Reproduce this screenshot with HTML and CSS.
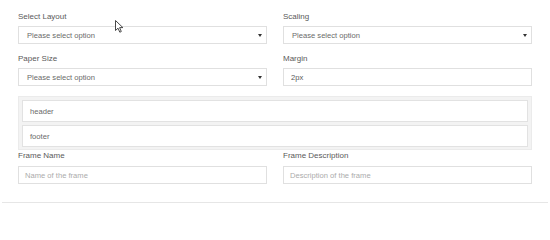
FILE: index.html
```html
<!DOCTYPE html>
<html>
<head>
<meta charset="utf-8">
<link rel="stylesheet" href="styles.css">
</head>
<body>
<div class="page">
  <div class="grid">
    <div class="field">
      <label class="lbl">Select Layout</label>
      <div class="select"><span>Please select option</span><i class="caret"></i></div>
    </div>
    <div class="field">
      <label class="lbl">Scaling</label>
      <div class="select"><span>Please select option</span><i class="caret"></i></div>
    </div>
    <div class="field">
      <label class="lbl">Paper Size</label>
      <div class="select"><span>Please select option</span><i class="caret"></i></div>
    </div>
    <div class="field">
      <label class="lbl">Margin</label>
      <div class="input value">2px</div>
    </div>
  </div>
  <div class="panel">
    <div class="item">header</div>
    <div class="item">footer</div>
  </div>
  <div class="grid grid-bottom">
    <div class="field">
      <label class="lbl">Frame Name</label>
      <div class="input placeholder">Name of the frame</div>
    </div>
    <div class="field">
      <label class="lbl">Frame Description</label>
      <div class="input placeholder">Description of the frame</div>
    </div>
  </div>
  <div class="rule"></div>
  <svg class="cursor" width="9" height="13" viewBox="0 0 9 13">
    <path d="M0.5 0.5 L0.5 10.5 L3 8.2 L4.8 12.2 L6.3 11.5 L4.6 7.6 L7.9 7.6 Z" fill="#fff" stroke="#333" stroke-width="0.9" stroke-linejoin="round"/>
  </svg>
</div>
</body>
</html>
```

FILE: styles.css
```css
* { box-sizing: border-box; }
html, body { margin: 0; padding: 0; background: #fff; }
body {
  font-family: "Liberation Sans", Arial, sans-serif;
  color: #555;
}
.page {
  position: relative;
  width: 550px;
  height: 207px;
  padding: 11px 18px 0 18px;
}
.grid {
  display: grid;
  grid-template-columns: 249px 249px;
  column-gap: 16px;
  row-gap: 9px;
}
.field {
  display: flex;
  flex-direction: column;
}
.lbl {
  display: block;
  font-size: 8px;
  line-height: 12px;
  height: 12px;
  margin-bottom: 3px;
  color: #5a5a5a;
}
.grid-bottom .lbl { margin-bottom: 4px; }
.select, .input {
  height: 18px;
  border: 1px solid #e0e0e0;
  background: #fff;
  font-size: 7.6px;
  display: flex;
  align-items: center;
}
.select {
  justify-content: space-between;
  padding: 0 4px 0 8px;
  color: #6a6a6a;
}
.caret {
  display: block;
  width: 0;
  height: 0;
  border-left: 2px solid transparent;
  border-right: 2px solid transparent;
  border-top: 3px solid #333;
  margin-top: 1px;
}
.input { padding: 0 6px; }
.value { color: #5a5a5a; padding-left: 7px; }
.placeholder { color: #ababab; }
.panel {
  margin-top: 10px;
  background: #f3f3f3;
  border: 1px solid #ebebeb;
  padding: 3px 3px 2px 3px;
  display: flex;
  flex-direction: column;
  gap: 3px;
}
.item {
  height: 22px;
  background: #fff;
  border: 1px solid #e2e2e2;
  font-size: 7.6px;
  color: #6a6a6a;
  display: flex;
  align-items: center;
  padding-left: 7px;
}
.rule {
  margin: 18px -16px 0 -16px;
  border-top: 1px solid #e6e6e6;
}
.cursor {
  position: absolute;
  left: 115px;
  top: 20px;
}
```
